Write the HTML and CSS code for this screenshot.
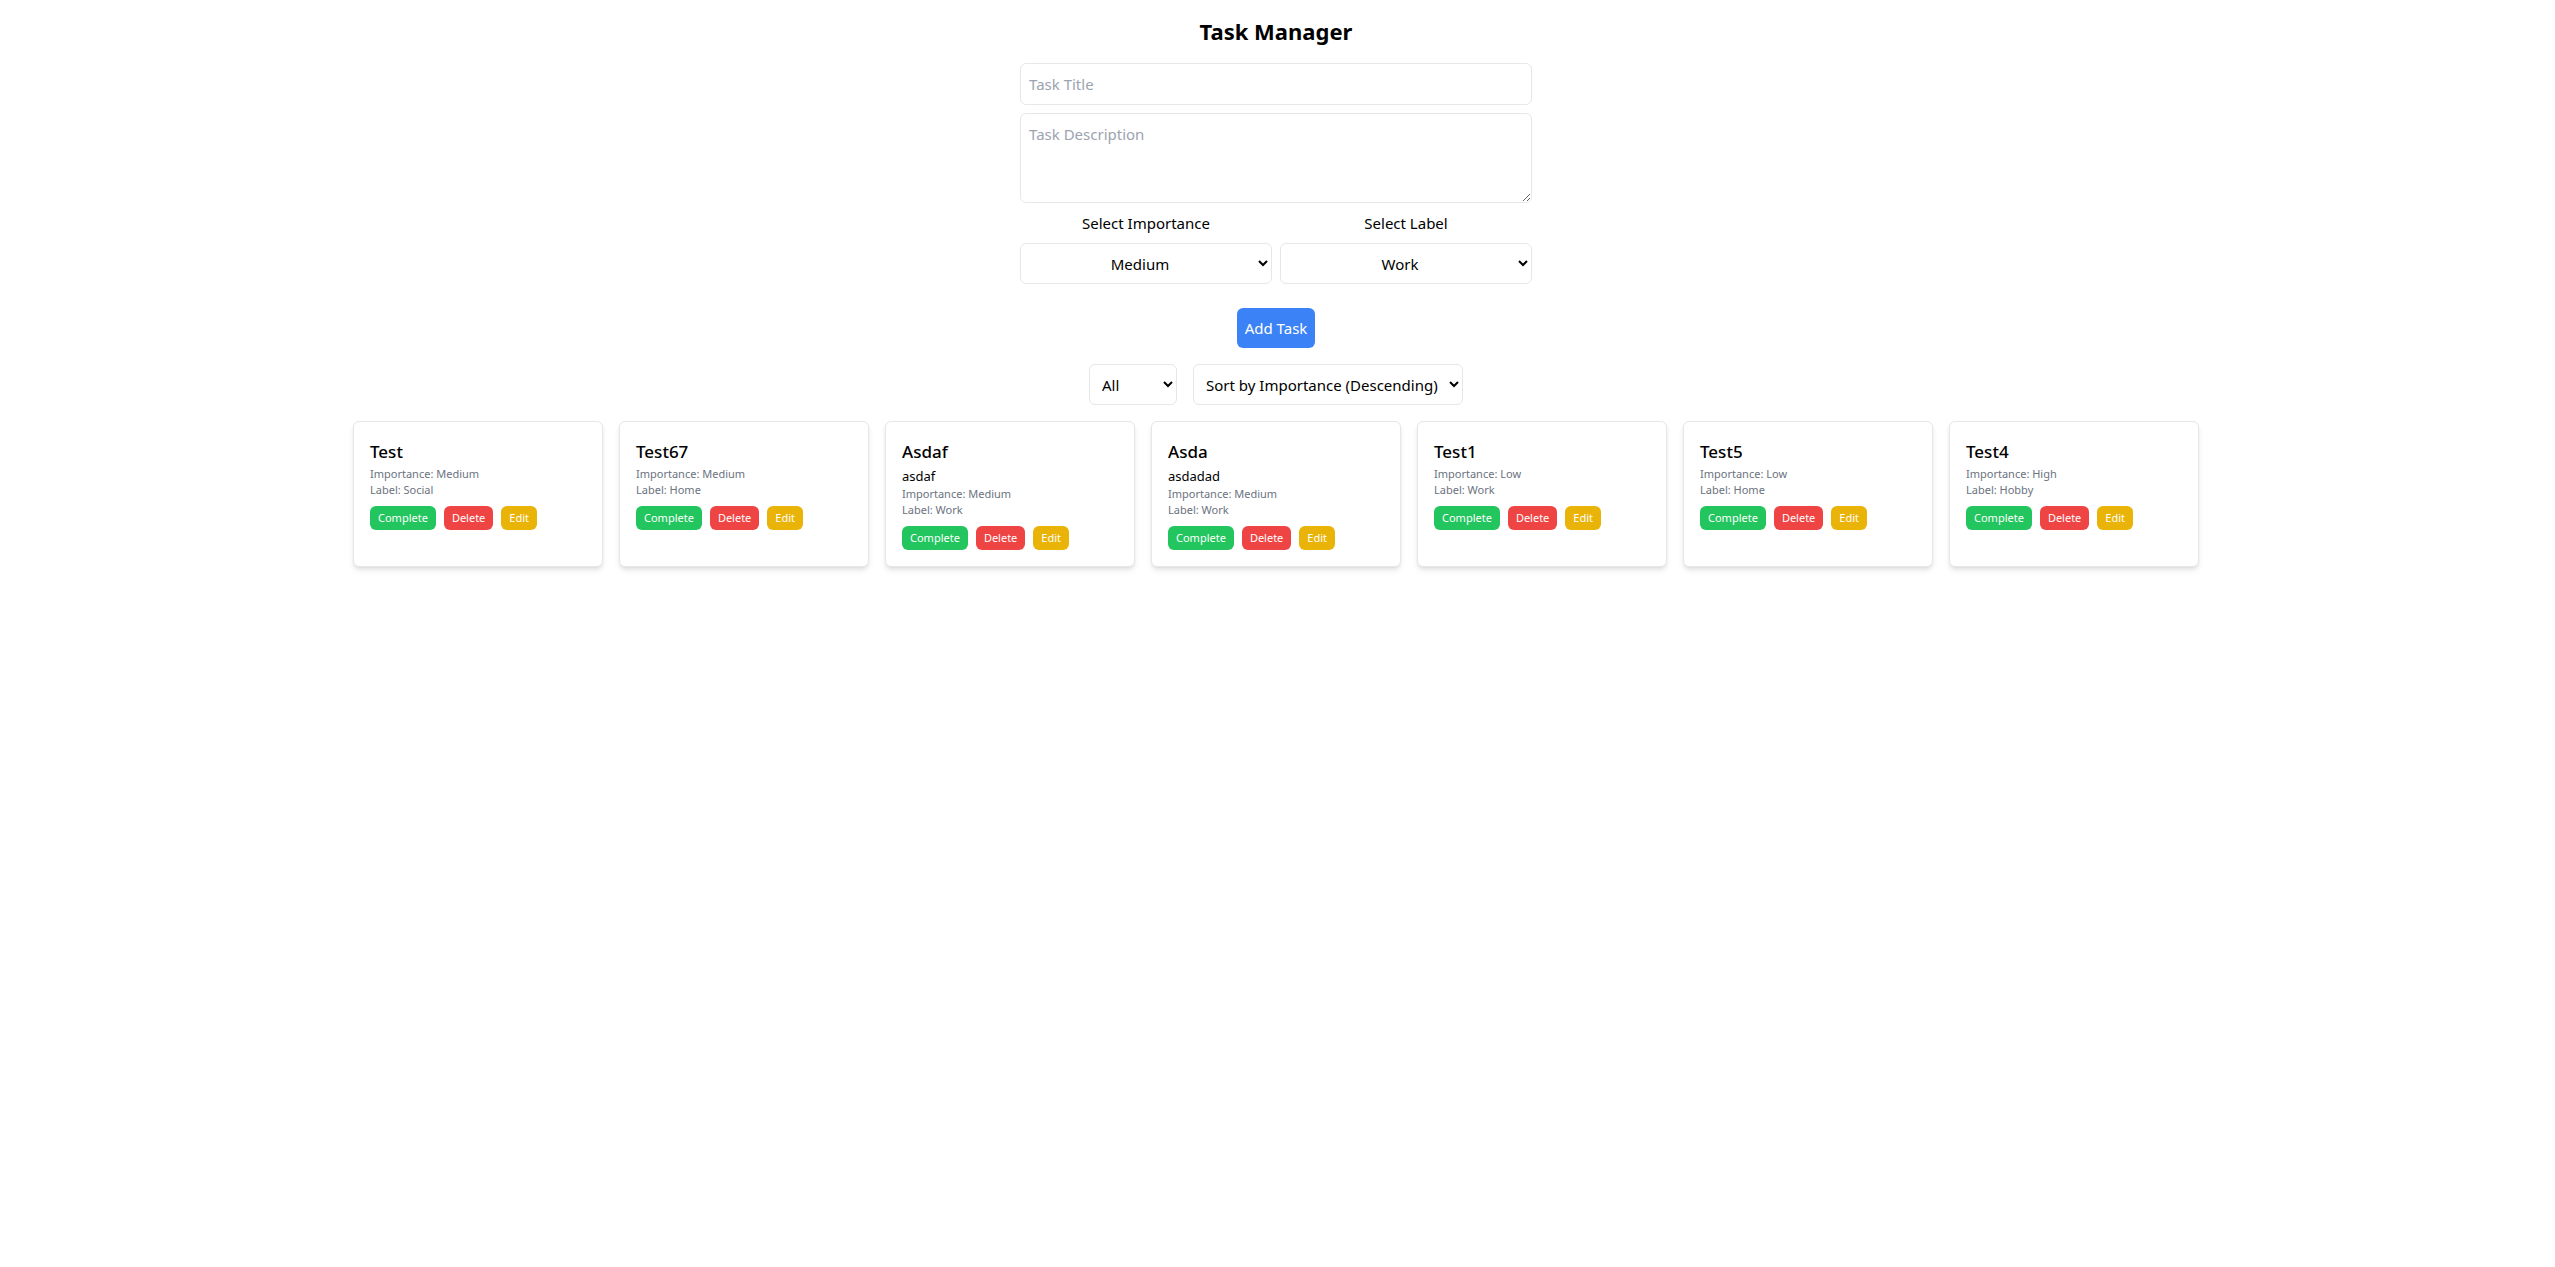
FILE: index.html
```html
<!DOCTYPE html>
<html lang="en">
<head>
<meta charset="utf-8">
<title>Task Manager</title>
<meta name="viewport" content="width=device-width, initial-scale=1">
<link rel="stylesheet" href="styles.css">
</head>
<body>
<main class="page">
  <h1 class="page-title">Task Manager</h1>

  <form class="task-form">
    <input class="field" type="text" placeholder="Task Title" aria-label="Task Title">
    <textarea class="field" rows="3" placeholder="Task Description" aria-label="Task Description"></textarea>
    <div class="choices">
      <div class="choice">
        <label for="importance">Select Importance</label>
        <select class="field" id="importance">
          <option>Low</option>
          <option selected>Medium</option>
          <option>High</option>
        </select>
      </div>
      <div class="choice">
        <label for="label">Select Label</label>
        <select class="field" id="label">
          <option selected>Work</option>
          <option>Social</option>
          <option>Home</option>
          <option>Hobby</option>
        </select>
      </div>
    </div>
    <button class="add-button" type="button">Add Task</button>
  </form>

  <div class="filters">
    <select class="field" aria-label="Filter by label">
      <option selected>All</option>
      <option>Work</option>
      <option>Social</option>
      <option>Home</option>
      <option>Hobby</option>
    </select>
    <select class="field" aria-label="Sort order">
      <option selected>Sort by Importance (Descending)</option>
      <option>Sort by Importance (Ascending)</option>
    </select>
  </div>

  <ul class="tasks">
    <li class="task">
      <h2 class="task-title">Test</h2>
      <p class="task-meta">Importance: Medium</p>
      <p class="task-meta">Label: Social</p>
      <div class="actions">
        <button class="action complete" type="button">Complete</button>
        <button class="action delete" type="button">Delete</button>
        <button class="action edit" type="button">Edit</button>
      </div>
    </li>
    <li class="task">
      <h2 class="task-title">Test67</h2>
      <p class="task-meta">Importance: Medium</p>
      <p class="task-meta">Label: Home</p>
      <div class="actions">
        <button class="action complete" type="button">Complete</button>
        <button class="action delete" type="button">Delete</button>
        <button class="action edit" type="button">Edit</button>
      </div>
    </li>
    <li class="task">
      <h2 class="task-title">Asdaf</h2>
      <p class="task-text">asdaf</p>
      <p class="task-meta">Importance: Medium</p>
      <p class="task-meta">Label: Work</p>
      <div class="actions">
        <button class="action complete" type="button">Complete</button>
        <button class="action delete" type="button">Delete</button>
        <button class="action edit" type="button">Edit</button>
      </div>
    </li>
    <li class="task">
      <h2 class="task-title">Asda</h2>
      <p class="task-text">asdadad</p>
      <p class="task-meta">Importance: Medium</p>
      <p class="task-meta">Label: Work</p>
      <div class="actions">
        <button class="action complete" type="button">Complete</button>
        <button class="action delete" type="button">Delete</button>
        <button class="action edit" type="button">Edit</button>
      </div>
    </li>
    <li class="task">
      <h2 class="task-title">Test1</h2>
      <p class="task-meta">Importance: Low</p>
      <p class="task-meta">Label: Work</p>
      <div class="actions">
        <button class="action complete" type="button">Complete</button>
        <button class="action delete" type="button">Delete</button>
        <button class="action edit" type="button">Edit</button>
      </div>
    </li>
    <li class="task">
      <h2 class="task-title">Test5</h2>
      <p class="task-meta">Importance: Low</p>
      <p class="task-meta">Label: Home</p>
      <div class="actions">
        <button class="action complete" type="button">Complete</button>
        <button class="action delete" type="button">Delete</button>
        <button class="action edit" type="button">Edit</button>
      </div>
    </li>
    <li class="task">
      <h2 class="task-title">Test4</h2>
      <p class="task-meta">Importance: High</p>
      <p class="task-meta">Label: Hobby</p>
      <div class="actions">
        <button class="action complete" type="button">Complete</button>
        <button class="action delete" type="button">Delete</button>
        <button class="action edit" type="button">Edit</button>
      </div>
    </li>
  </ul>
</main>
</body>
</html>
```
FILE: styles.css
```css
*,
*::before,
*::after {
  box-sizing: border-box;
}

body {
  margin: 0;
  background: #fff;
  color: #000;
  font-family: "Noto Sans", sans-serif;
  font-size: 15px;
  line-height: 24px;
}

h1,
h2,
p,
ul {
  margin: 0;
  padding: 0;
}

button,
input,
select,
textarea {
  margin: 0;
  font: inherit;
  color: inherit;
}

.page {
  display: flex;
  flex-direction: column;
  align-items: center;
  gap: 16px;
  padding: 15px 19px 16px 16px;
}

.page-title {
  font-size: 22px;
  font-weight: 700;
  line-height: 32px;
}

.task-form {
  display: flex;
  flex-direction: column;
  align-items: center;
  gap: 8px;
  width: 100%;
  max-width: 512px;
}

.field {
  display: block;
  padding: 8px;
  border: 1px solid #e5e7eb;
  border-radius: 6px;
  background: #fff;
}

.task-form .field {
  width: 100%;
}

.field::placeholder {
  color: #9ca3af;
}

textarea.field {
  resize: vertical;
}

select.field {
  min-width: 88px;
  height: 41px;
}

.choices {
  display: grid;
  grid-template-columns: 1fr 1fr;
  gap: 8px;
  width: 100%;
}

.choice {
  display: flex;
  flex-direction: column;
  gap: 8px;
  text-align: center;
}

.choice .field {
  text-align: center;
}

.add-button {
  margin-top: 16px;
  padding: 8px;
  border: 0;
  border-radius: 6px;
  background: #3b82f6;
  color: #fff;
}

.filters {
  display: flex;
  gap: 16px;
}

.tasks {
  display: flex;
  flex-wrap: wrap;
  justify-content: center;
  gap: 16px;
  list-style: none;
}

.task {
  width: 250px;
  padding: 16px;
  border: 1px solid #e5e7eb;
  border-radius: 6px;
  background: #fff;
  box-shadow: 0 4px 6px -1px rgb(0 0 0 / 10%), 0 2px 4px -2px rgb(0 0 0 / 10%);
}

.task-title {
  font-size: 17px;
  font-weight: 500;
  line-height: 28px;
}

.task-text {
  font-size: 13px;
  line-height: 20px;
}

.task-meta {
  color: #6b7280;
  font-size: 11px;
  line-height: 16px;
}

.actions {
  display: flex;
  gap: 8px;
  margin-top: 8px;
}

.action {
  padding: 4px 8px;
  border: 0;
  border-radius: 6px;
  color: #fff;
  font-size: 11px;
  line-height: 16px;
}

.complete {
  background: #22c55e;
}

.delete {
  background: #ef4444;
}

.edit {
  background: #eab308;
}
```
